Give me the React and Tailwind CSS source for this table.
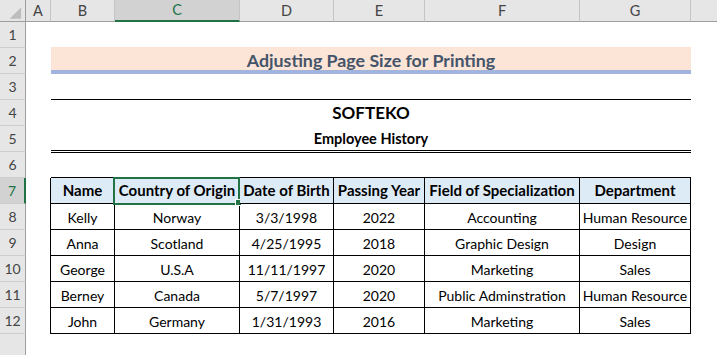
import React from "react";

const rows = [
  ["Kelly", "Norway", "3/3/1998", "2022", "Accounting", "Human Resource"],
  ["Anna", "Scotland", "4/25/1995", "2018", "Graphic Design", "Design"],
  ["George", "U.S.A", "11/11/1997", "2020", "Marketing", "Sales"],
  ["Berney", "Canada", "5/7/1997", "2020", "Public Adminstration", "Human Resource"],
  ["John", "Germany", "1/31/1993", "2016", "Marketing", "Sales"],
];
const head = ["Name", "Country of Origin", "Date of Birth", "Passing Year", "Field of Specialization", "Department"];
const widths = ["w-[64px]", "w-[125px]", "w-[94px]", "w-[91px]", "w-[155px]", "w-[111px]"];

function RowHead({ n, active }) {
  return (
    <div
      className={
        "w-[26px] shrink-0 flex items-center justify-center border-b border-[#cdcdcd] text-[14px] " +
        (active
          ? "bg-[#d2d2d2] text-[#217346] border-r-2 border-r-[#217346]"
          : "bg-[#e6e6e6] text-[#444] border-r border-r-[#9e9e9e]")
      }
    >
      {n}
    </div>
  );
}

function ColHead({ w, label, active }) {
  return (
    <div
      className={
        w +
        " shrink-0 h-full flex items-center justify-center text-[14.5px] border-r border-r-[#c4c4c4] " +
        (active ? "bg-[#d2d2d2] text-[#217346] border-b-2 border-b-[#217346]" : "border-b border-b-[#9e9e9e] text-[#444]")
      }
    >
      {label}
    </div>
  );
}

export default function App() {
  return (
    <div className="w-[717px] h-[355px] overflow-hidden bg-white font-['Lato',sans-serif] text-black">
      {/* column headers */}
      <div className="flex h-[22px] bg-[#e6e6e6]">
        <div className="w-[26px] shrink-0 h-full border-r border-r-[#9e9e9e] border-b border-b-[#9e9e9e] flex items-center justify-center">
          <svg width="26" height="21" viewBox="0 0 26 21">
            <polygon points="22,7 22,19 10,19" fill="#bdbdbd" />
          </svg>
        </div>
        <ColHead w="w-[25px]" label="A" />
        <ColHead w="w-[64px]" label="B" />
        <ColHead w="w-[125px]" label="C" active />
        <ColHead w="w-[94px]" label="D" />
        <ColHead w="w-[91px]" label="E" />
        <ColHead w="w-[155px]" label="F" />
        <ColHead w="w-[111px]" label="G" />
        <div className="flex-1 h-full border-b border-b-[#9e9e9e]" />
      </div>

      {/* row 1 */}
      <div className="flex h-[26px]">
        <RowHead n={1} />
      </div>

      {/* row 2 title */}
      <div className="flex h-[26px]">
        <RowHead n={2} />
        <div className="w-[25px] shrink-0" />
        <div className="w-[640px] shrink-0 h-[27px] -mt-px bg-[#fce4d6] border-b-[4px] border-b-[#a0b4de] flex items-center justify-center pt-[3px] text-[17.8px] font-bold text-[#44546a]">
          Adjusting Page Size for Printing
        </div>
      </div>

      {/* row 3 */}
      <div className="flex h-[26px]">
        <RowHead n={3} />
        <div className="w-[25px] shrink-0" />
        <div className="w-[640px] shrink-0 border-b border-b-black" />
      </div>

      {/* row 4 */}
      <div className="flex h-[26px]">
        <RowHead n={4} />
        <div className="w-[25px] shrink-0" />
        <div className="w-[640px] shrink-0 flex items-center justify-center text-[17px] font-bold">SOFTEKO</div>
      </div>

      {/* row 5 */}
      <div className="flex h-[26px]">
        <RowHead n={5} />
        <div className="w-[25px] shrink-0" />
        <div className="w-[640px] shrink-0 h-[27px] border-b-[3px] border-double border-b-black flex items-center justify-center text-[14.5px] font-bold pt-[1px]">
          Employee History
        </div>
      </div>

      {/* row 6 */}
      <div className="flex h-[26px]">
        <RowHead n={6} />
        <div className="w-[25px] shrink-0" />
        <div className="w-[640px] shrink-0 border-b border-b-black" />
      </div>

      {/* row 7 header */}
      <div className="flex h-[26px]">
        <RowHead n={7} active />
        <div className="w-[25px] shrink-0 border-r border-r-black" />
        {head.map((h, i) => (
          <div
            key={h}
            className={
              widths[i] +
              " shrink-0 relative bg-[#ddebf7] border-r border-r-black border-b border-b-black flex items-center justify-center text-[15px] font-bold whitespace-nowrap"
            }
          >
            {h}
            {i === 1 && (
              <>
                <div className="absolute left-[-2px] top-[-1px] w-[127px] h-[28px] border-2 border-[#217346] pointer-events-none" />
                <div className="absolute left-[120px] top-[21px] w-[7px] h-[7px] bg-[#217346] border border-white" />
              </>
            )}
          </div>
        ))}
      </div>

      {/* data rows */}
      {rows.map((r, ri) => (
        <div key={ri} className="flex h-[26px]">
          <RowHead n={8 + ri} />
          <div className="w-[25px] shrink-0 border-r border-r-black" />
          {r.map((c, ci) => (
            <div
              key={ci}
              className={
                widths[ci] +
                " shrink-0 border-r border-r-black border-b border-b-black flex items-center justify-center pt-[1px] text-[14px] whitespace-nowrap"
              }
            >
              {c}
            </div>
          ))}
        </div>
      ))}

      {/* row 13 */}
      <div className="flex h-[26px]">
        <div className="w-[26px] shrink-0 bg-[#e6e6e6] border-r border-r-[#9e9e9e]" />
      </div>
    </div>
  );
}
